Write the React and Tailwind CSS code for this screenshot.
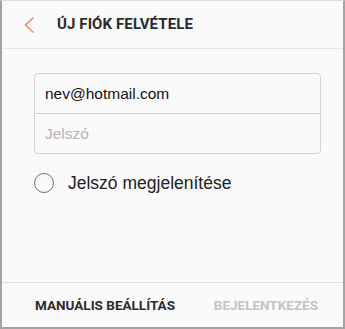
export default function App() {
  return (
    <div className="w-[345px] h-[329px] bg-[#fafafa] border-x-2 border-b-2 border-t border-x-[#a3a3a3] border-b-[#a3a3a3] border-t-[#dcdcdc] flex flex-col font-['Roboto',sans-serif]">
      {/* Header */}
      <div className="h-[48px] flex items-center border-b border-[#e6e6e6] shrink-0">
        <svg width="12" height="18" viewBox="0 0 12 18" className="ml-[21px] mt-[1px]">
          <path d="M10.5 1.5 L2.5 9 L10.5 16.5" fill="none" stroke="#f28a5c" strokeWidth="1.5" />
        </svg>
        <span className="ml-[22px] text-[15px] font-bold text-[#2b2b2b] tracking-[0.1px]">ÚJ FIÓK FELVÉTELE</span>
      </div>

      {/* Body */}
      <div className="flex-1 flex flex-col pt-[24px] px-[32px] font-['Liberation_Sans',sans-serif]">
        <div className="w-[287px] border border-[#d4d4d4] rounded-[4px] flex flex-col">
          <div className="h-[40px] flex items-center px-[10px] border-b border-[#d4d4d4] text-[15.5px] text-[#111]">
            nev@hotmail.com
          </div>
          <div className="h-[39px] flex items-center px-[10px] text-[15.5px] text-[#b5b5b5]">
            Jelszó
          </div>
        </div>
        <div className="flex items-center mt-[16px]">
          <div className="w-[20px] h-[20px] rounded-full border-[1.5px] border-[#6e6e6e]" />
          <span className="ml-[14px] text-[17.5px] text-[#222]">Jelszó megjelenítése</span>
        </div>
      </div>

      {/* Footer */}
      <div className="h-[45px] border-t border-[#dedede] flex items-center shrink-0">
        <span className="ml-[33px] text-[13.5px] font-bold text-[#2b2b2b]">MANUÁLIS BEÁLLÍTÁS</span>
        <span className="ml-auto mr-[25px] text-[13.5px] font-bold text-[#c4c4c4]">BEJELENTKEZÉS</span>
      </div>
    </div>
  );
}
